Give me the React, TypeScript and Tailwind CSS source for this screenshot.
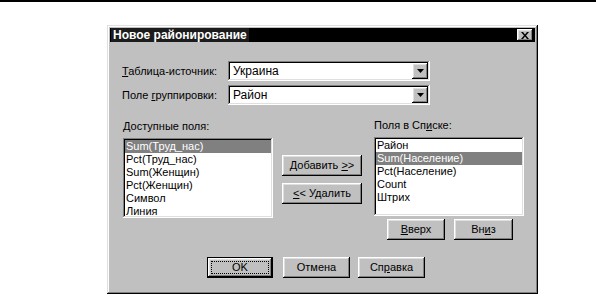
import React from "react";

const raised =
  "bg-[#c0c0c0] shadow-[inset_-1px_-1px_#000,inset_1px_1px_#fff,inset_-2px_-2px_#808080,inset_2px_2px_#dfdfdf]";
const sunken =
  "bg-white shadow-[inset_-1px_-1px_#fff,inset_1px_1px_#808080,inset_-2px_-2px_#dfdfdf,inset_2px_2px_#000]";

interface BtnProps {
  children: React.ReactNode;
  className?: string;
}

const Btn = ({ children, className }: BtnProps) => {
  return (
    <div className={`${raised} h-[21px] flex items-center justify-center text-[11px] text-black ${className ?? ""}`}>
      {children}
    </div>
  );
};

const Combo = ({ value }: { value: string }) => {
  return (
    <div className={`${sunken} w-[202px] h-[20px] flex items-center p-[2px]`}>
      <span className="flex-1 pl-[3px] text-[12px] leading-none">{value}</span>
      <div className={`${raised} w-[16px] h-[16px] flex items-center justify-center`}>
        <svg width="7" height="4" viewBox="0 0 7 4">
          <path d="M0 0h7L3.5 4z" fill="#000" />
        </svg>
      </div>
    </div>
  );
};

interface ListProps {
  items: string[];
  selected: number;
}

const ListBox = ({ items, selected }: ListProps) => {
  return (
    <div className={`${sunken} w-[150px] h-[80px] p-[2px] overflow-hidden`}>
      {items.map((it, i) => (
        <div
          key={it}
          className={`h-[13px] leading-[13px] pl-[1px] text-[11px] ${i === selected ? "bg-[#808080] text-white" : "text-black"}`}
        >
          {it}
        </div>
      ))}
    </div>
  );
};

export default function App() {
  return (
    <div className="w-[596px] h-[297px] bg-white overflow-hidden font-['Liberation_Sans',Arial,sans-serif]">
      <div className="h-[2px] bg-black" />
      <div className="ml-[107px] mt-[23px] w-[431px] h-[269px] bg-[#c0c0c0] p-[3px] shadow-[inset_-1px_-1px_#000,inset_1px_1px_#dfdfdf,inset_-2px_-2px_#808080,inset_2px_2px_#fff]">
        {/* title bar */}
        <div className="h-[14px] bg-black flex items-center justify-between pl-[1px] pr-[2px]">
          <span className="bg-[#1c1c1c] px-[2px] text-white text-[12px] font-bold leading-[14px]">
            Новое районирование
          </span>
          <div className={`${raised} w-[16px] h-[12px] flex items-center justify-center`}>
            <svg width="8" height="7" viewBox="0 0 8 7">
              <path d="M0 0h2l2 2.5L6 0h2L5 3.5 8 7H6L4 4.5 2 7H0l3-3.5z" fill="#000" />
            </svg>
          </div>
        </div>

        <div className="pl-[12px] pt-[19px] text-[11px] text-black">
          <div className="flex items-center h-[20px]">
            <span className="w-[106px]">
              <u>Т</u>аблица-источник:
            </span>
            <Combo value="Украина" />
          </div>
          <div className="flex items-center h-[20px] mt-[4px]">
            <span className="w-[106px]">
              Поле <u>г</u>руппировки:
            </span>
            <Combo value="Район" />
          </div>

          <div className="flex mt-[15px] h-[120px] pl-[1px]">
            <div className="w-[150px] flex flex-col">
              <div className="h-[13px] leading-[13px] mb-[5px]">
                <u>Д</u>оступные поля:
              </div>
              <ListBox
                items={["Sum(Труд_нас)", "Pct(Труд_нас)", "Sum(Женщин)", "Pct(Женщин)", "Символ", "Линия"]}
                selected={0}
              />
            </div>

            <div className="ml-[9px] w-[80px] pt-[35px] flex flex-col gap-[7px]">
              <Btn>
                Добавить&nbsp;<u>&gt;</u>&gt;
              </Btn>
              <Btn>
                <u>&lt;</u>&lt; Удалить
              </Btn>
            </div>

            <div className="ml-[12px] w-[150px] flex flex-col">
              <div className="h-[13px] leading-[13px] mb-[5px] -mt-[1px]">
                Поля в Сп<u>и</u>ске:
              </div>
              <ListBox
                items={["Район", "Sum(Население)", "Pct(Население)", "Count", "Штрих"]}
                selected={1}
              />
              <div className="flex gap-[9px] pl-[13px] mt-[3px]">
                <Btn className="w-[58px]">
                  <u>В</u>верх
                </Btn>
                <Btn className="w-[59px]">
                  Вн<u>и</u>з
                </Btn>
              </div>
            </div>
          </div>

          <div className="flex mt-[17px] ml-[85px]">
            <div className="w-[66px] h-[21px] border border-black">
              <div className={`${raised} w-full h-full p-[3px]`}>
                <div className="w-full h-full border border-dotted border-black flex items-center justify-center">
                  OK
                </div>
              </div>
            </div>
            <Btn className="w-[67px] ml-[10px]">Отмена</Btn>
            <Btn className="w-[67px] ml-[8px]">
              Сп<u>р</u>авка
            </Btn>
          </div>
        </div>
      </div>
    </div>
  );
}
